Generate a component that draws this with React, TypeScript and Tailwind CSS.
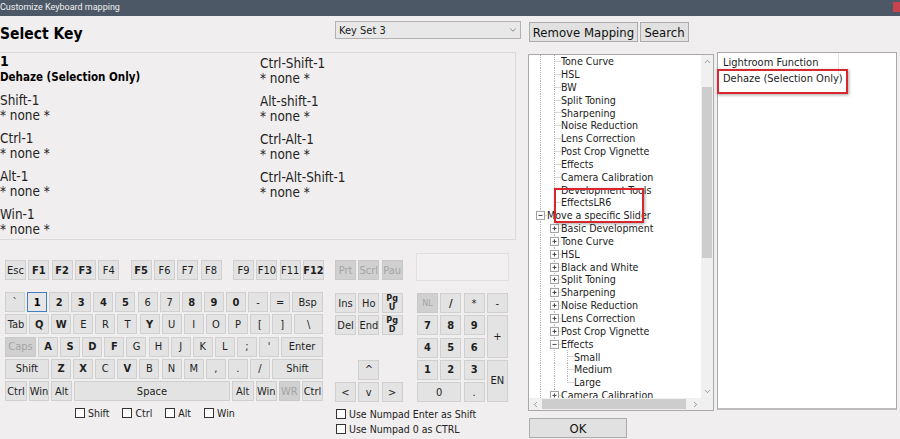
import React from 'react';
import { ChevronDown, ChevronUp, ChevronLeft, ChevronRight } from 'lucide-react';

type KeyProps = {
  label: React.ReactNode;
  w?: string;
  h?: string;
  b?: boolean;
  off?: boolean;
  sel?: boolean;
  small?: boolean;
};

function Key({ label, w = 'w-[20px]', h = 'h-[20px]', b, off, sel, small }: KeyProps) {
  const tone = off
    ? 'bg-[#d0d0d0] border-[#c8c8c8] text-[#a4a4a4]'
    : sel
    ? 'bg-[#e6e6e6] border-[#3f7fc4] text-black'
    : 'bg-[#e3e3e3] border-[#d0d0d0] text-[#1e1e1e]';
  return (
    <div
      className={`${w} ${h} shrink-0 flex items-center justify-center border text-center ${small ? 'text-[9px] leading-[9px]' : 'text-[11px] leading-none'} ${b ? 'font-bold' : ''} ${tone}`}
    >
      {label}
    </div>
  );
}

const K = (l: string, b = 0) => ({ l, b: !!b });

const fGroups = [
  [K('Esc'), K('F1', 1), K('F2', 1), K('F3', 1), K('F4')],
  [K('F5', 1), K('F6'), K('F7'), K('F8')],
  [K('F9'), K('F10'), K('F11'), K('F12', 1)],
];

const numRow = [K('`'), K('1', 1), K('2', 1), K('3', 1), K('4', 1), K('5', 1), K('6'), K('7'), K('8', 1), K('9', 1), K('0', 1), K('-'), K('=')];
const qRow = [K('Q', 1), K('W', 1), K('E'), K('R'), K('T'), K('Y', 1), K('U'), K('I'), K('O'), K('P'), K('['), K(']')];
const aRow = [K('A', 1), K('S', 1), K('D', 1), K('F', 1), K('G'), K('H'), K('J'), K('K'), K('L'), K(';'), K("'")];
const zRow = [K('Z', 1), K('X', 1), K('C'), K('V', 1), K('B'), K('N'), K('M'), K(','), K('.'), K('/')];

function Check({ label, cls = '' }: { label: string; cls?: string }) {
  return (
    <div className={`flex items-center whitespace-nowrap ${cls}`}>
      <div className="w-[10px] h-[10px] border border-[#333] bg-white shrink-0" />
      <span className="ml-[3px] text-[10.5px] leading-none text-[#222]">{label}</span>
    </div>
  );
}

type Row = { t: string; d: number; box?: '+' | '-'; last?: boolean };

const treeRows: Row[] = [
  { t: 'Tone Curve', d: 1 },
  { t: 'HSL', d: 1 },
  { t: 'BW', d: 1 },
  { t: 'Split Toning', d: 1 },
  { t: 'Sharpening', d: 1 },
  { t: 'Noise Reduction', d: 1 },
  { t: 'Lens Correction', d: 1 },
  { t: 'Post Crop Vignette', d: 1 },
  { t: 'Effects', d: 1 },
  { t: 'Camera Calibration', d: 1 },
  { t: 'Development Tools', d: 1 },
  { t: 'EffectsLR6', d: 1, last: true },
  { t: 'Move a specific Slider', d: 0, box: '-' },
  { t: 'Basic Development', d: 1, box: '+' },
  { t: 'Tone Curve', d: 1, box: '+' },
  { t: 'HSL', d: 1, box: '+' },
  { t: 'Black and White', d: 1, box: '+' },
  { t: 'Split Toning', d: 1, box: '+' },
  { t: 'Sharpening', d: 1, box: '+' },
  { t: 'Noise Reduction', d: 1, box: '+' },
  { t: 'Lens Correction', d: 1, box: '+' },
  { t: 'Post Crop Vignette', d: 1, box: '+' },
  { t: 'Effects', d: 1, box: '-' },
  { t: 'Small', d: 2 },
  { t: 'Medium', d: 2 },
  { t: 'Large', d: 2, last: true },
  { t: 'Camera Calibration', d: 1, box: '+' },
];

const COLS = [11.5, 25.5, 38.5];
const RH = 12.85;

function TreeRow({ r }: { r: Row }) {
  const x = COLS[r.d];
  const mid = RH / 2;
  const w = Math.round(x + 6);
  const line = '#b0b0b0';
  return (
    <div className="flex items-center h-[12.85px] whitespace-nowrap">
      <svg width={w} height={RH} className="shrink-0">
        {COLS.slice(0, r.d).map((c) => (
          <line key={c} x1={c} y1={0} x2={c} y2={RH} stroke={line} strokeDasharray="1 1" />
        ))}
        <line x1={x} y1={0} x2={x} y2={r.last ? mid : RH} stroke={line} strokeDasharray="1 1" />
        <line x1={x} y1={mid} x2={w} y2={mid} stroke={line} strokeDasharray="1 1" />
        {r.box && (
          <g>
            <rect x={x - 4} y={mid - 4} width={8} height={8} fill="#fff" stroke="#a0a0a0" />
            <line x1={x - 2} y1={mid} x2={x + 2} y2={mid} stroke="#444" />
            {r.box === '+' && <line x1={x} y1={mid - 2} x2={x} y2={mid + 2} stroke="#444" />}
          </g>
        )}
      </svg>
      <span className="text-[10.6px] leading-none text-[#1c1c1c]">{r.t}</span>
    </div>
  );
}

export default function App() {
  return (
    <div className="w-[900px] h-[439px] overflow-hidden bg-[#f0eeee] font-['DejaVu_Sans_Condensed','Liberation_Sans',sans-serif] text-[#1b1b1b]">
      {/* title bar */}
      <div className="h-[16px] bg-[#4d5866] flex items-start justify-between">
        <span className="font-['Roboto',sans-serif] text-[9px] leading-[15px] text-[#eef0f3]">Customize Keyboard mapping</span>
        <div className="w-[7px] h-[10px] mt-[2px] bg-[#c8434e]" />
      </div>

      <div className="flex">
        {/* left column */}
        <div className="w-[521px] shrink-0">
          <div className="h-[36px] flex items-start">
            <h1 className="mt-[8px] text-[15.5px] leading-[20px] font-bold text-black">Select Key</h1>
            <div className="ml-auto mt-[5px] w-[186px] h-[18px] bg-[#e8e8e8] border border-[#b3b3b3] flex items-center justify-between pl-[3px] pr-[2px]">
              <span className="text-[11px] leading-none text-[#222]">Key Set 3</span>
              <ChevronDown size={10} strokeWidth={1.5} className="text-[#555]" />
            </div>
          </div>

          {/* info panel */}
          <div className="-ml-px w-[517px] h-[188px] border border-[#dcdada] flex">
            <div className="w-[260px] flex flex-col">
              <div className="text-[14px] leading-[16px] font-bold text-black">1</div>
              <div className="text-[11.5px] leading-[16px] font-bold text-black">Dehaze (Selection Only)</div>
              {['Shift-1', 'Ctrl-1', 'Alt-1', 'Win-1'].map((k, i) => (
                <div key={k} className={`${i === 0 ? 'mt-[7.5px]' : 'mt-[8px]'} text-[13.4px] leading-[15px] text-[#222]`}>
                  <div>{k}</div>
                  <div>* none *</div>
                </div>
              ))}
            </div>
            <div className="flex flex-col pt-[2.5px]">
              {['Ctrl-Shift-1', 'Alt-shift-1', 'Ctrl-Alt-1', 'Ctrl-Alt-Shift-1'].map((k, i) => (
                <div key={k} className={`${i === 0 ? '' : 'mt-[8px]'} text-[13.4px] leading-[15px] text-[#222]`}>
                  <div>{k}</div>
                  <div>* none *</div>
                </div>
              ))}
            </div>
          </div>

          {/* keyboard */}
          <div className="mt-[13px] flex items-start">
            <div className="ml-[5px] w-[318px] flex flex-col">
              <div className="mt-[7px] flex gap-[11.5px]">
                {fGroups.map((g, gi) => (
                  <div key={gi} className="flex gap-[2.3px]">
                    {g.map((k) => (
                      <Key key={k.l} label={k.l} b={k.b} w="w-[21px]" />
                    ))}
                  </div>
                ))}
              </div>
              <div className="mt-[12px] flex flex-col gap-[2.25px]">
                <div className="flex gap-[2.1px]">
                  {numRow.map((k) => (
                    <Key key={k.l} label={k.l} b={k.b} sel={k.l === '1'} />
                  ))}
                  <Key label="Bsp" w="flex-1" />
                </div>
                <div className="flex gap-[2.1px]">
                  <Key label="Tab" w="w-[22px]" />
                  {qRow.map((k) => (
                    <Key key={k.l} label={k.l} b={k.b} />
                  ))}
                  <Key label="\" w="flex-1" />
                </div>
                <div className="flex gap-[2.1px]">
                  <Key label="Caps" w="w-[31px]" off />
                  {aRow.map((k) => (
                    <Key key={k.l} label={k.l} b={k.b} />
                  ))}
                  <Key label="Enter" w="flex-1" />
                </div>
                <div className="flex gap-[2.1px]">
                  <Key label="Shift" w="w-[44px]" />
                  {zRow.map((k) => (
                    <Key key={k.l} label={k.l} b={k.b} />
                  ))}
                  <Key label="Shift" w="flex-1" />
                </div>
                <div className="flex gap-[2.1px]">
                  <Key label="Ctrl" w="w-[22px]" />
                  <Key label="Win" w="w-[20px]" />
                  <Key label="Alt" w="w-[21px]" />
                  <Key label="Space" w="flex-1" />
                  <Key label="Alt" w="w-[22px]" />
                  <Key label="Win" w="w-[21px]" />
                  <Key label="WR" w="w-[21px]" off />
                  <Key label="Ctrl" w="w-[21px]" />
                </div>
              </div>
              <div className="mt-[7px] pl-[70px] flex gap-[13px]">
                <Check label="Shift" />
                <Check label="Ctrl" />
                <Check label="Alt" />
                <Check label="Win" />
              </div>
            </div>

            {/* nav cluster */}
            <div className="ml-[12px] w-[68px] flex flex-col">
              <div className="mt-[7px] flex gap-[2.3px]">
                <Key label="Prt" w="w-[21px]" off />
                <Key label="Scrl" w="w-[21px]" off />
                <Key label="Pau" w="w-[21px]" off />
              </div>
              <div className="mt-[13px] grid grid-cols-[21px_21px_21px] auto-rows-[20px] gap-x-[2.3px] gap-y-[2.25px]">
                <Key label="Ins" w="w-full" />
                <Key label="Ho" w="w-full" />
                <Key label={<span>Pg<br />U</span>} w="w-full" b small />
                <Key label="Del" w="w-full" />
                <Key label="End" w="w-full" />
                <Key label={<span>Pg<br />D</span>} w="w-full" b small />
                <div />
                <div />
                <div />
                <div />
                <Key label="^" w="w-full" />
                <div />
                <Key label="<" w="w-full" />
                <Key label="v" w="w-full" />
                <Key label=">" w="w-full" />
              </div>
              <div className="mt-[4.5px] flex flex-col">
                <Check label="Use Numpad Enter as Shift" cls="h-[15px] ml-px" />
                <Check label="Use Numpad 0 as CTRL" cls="h-[15px] ml-px" />
              </div>
            </div>

            {/* numpad */}
            <div className="ml-[13px] flex flex-col">
              <div className="w-[93px] h-[28px] border border-[#e2e0e0] bg-[#f2f0f0]" />
              <div className="mt-[12px] ml-px grid grid-cols-[21px_21px_21px_21px] auto-rows-[20px] gap-x-[2.3px] gap-y-[2.25px]">
                <Key label="NL" w="w-full" off small />
                <Key label="/" w="w-full" b />
                <Key label="*" w="w-full" />
                <Key label="-" w="w-full" />
                <Key label="7" w="w-full" b />
                <Key label="8" w="w-full" b />
                <Key label="9" w="w-full" b />
                <div className="row-span-2 flex">
                  <Key label="+" w="w-full" h="h-full" />
                </div>
                <Key label="4" w="w-full" b />
                <Key label="5" w="w-full" b />
                <Key label="6" w="w-full" b />
                <Key label="1" w="w-full" b />
                <Key label="2" w="w-full" b />
                <Key label="3" w="w-full" b />
                <div className="row-span-2 flex">
                  <Key label="EN" w="w-full" h="h-full" />
                </div>
                <div className="col-span-2 flex">
                  <Key label="0" w="w-full" />
                </div>
                <Key label="." w="w-full" />
              </div>
            </div>
          </div>
        </div>

        {/* right column */}
        <div className="ml-[7px] flex flex-col">
          <div className="mt-[6px] ml-px flex gap-[2px]">
            <button className="w-[109px] h-[20px] bg-[#e1e1e1] border border-[#adadad] text-[13px] leading-none text-[#111]">Remove Mapping</button>
            <button className="w-[49px] h-[20px] bg-[#e1e1e1] border border-[#adadad] text-[13px] leading-none text-[#111]">Search</button>
          </div>

          <div className="mt-[10px] flex items-start gap-[3px]">
            {/* tree */}
            <div className="relative mt-[2px] w-[186px] h-[357px] border border-[#a9a9a9] bg-white flex flex-col">
              <div className="flex flex-1 min-h-0">
                <div className="flex-1 overflow-hidden">
                  {treeRows.map((r, i) => (
                    <TreeRow key={i} r={r} />
                  ))}
                </div>
                <div className="w-[12px] bg-[#f0f0f0] flex flex-col">
                  <div className="h-[13px] flex items-center justify-center">
                    <ChevronUp size={9} strokeWidth={1.6} className="text-[#606060]" />
                  </div>
                  <div className="flex-1">
                    <div className="mt-[19px] mx-px h-[171px] bg-[#cdcdcd]" />
                  </div>
                  <div className="h-[13px] flex items-center justify-center">
                    <ChevronDown size={9} strokeWidth={1.6} className="text-[#606060]" />
                  </div>
                </div>
              </div>
              <div className="h-[12px] flex bg-[#f0f0f0]">
                <div className="w-[12px] flex items-center justify-center">
                  <ChevronLeft size={9} strokeWidth={1.6} className="text-[#606060]" />
                </div>
                <div className="flex-1 flex items-center">
                  <div className="ml-px w-[144px] h-[10px] bg-[#cdcdcd]" />
                </div>
                <div className="w-[12px] flex items-center justify-center">
                  <ChevronRight size={9} strokeWidth={1.6} className="text-[#606060]" />
                </div>
                <div className="w-[12px] bg-[#f0f0f0]" />
              </div>
              <div className="absolute left-[25px] top-[133px] w-[90px] h-[35px] border-[2.5px] border-[#d8282e] shadow-[1px_1px_3px_rgba(0,0,0,0.35)]" />
            </div>

            {/* function list */}
            <div className="relative w-[180px] h-[358px] border border-[#a9a9a9] border-b-[#bdbdbd] border-b-2 bg-white">
              <div className="relative h-[18px] pt-[2px] pl-[5px] text-[11px] leading-[15px] text-[#1c1c1c]">
                Lightroom Function
                <div className="absolute left-[120px] top-0 w-px h-[22px] bg-[#e3e3e3]" />
              </div>
              <div className="pl-[5px] text-[11px] leading-[15px] text-[#1c1c1c]">Dehaze (Selection Only)</div>
              <div className="absolute left-[-1px] top-[16px] w-[131px] h-[25px] border-[2.5px] border-[#d8282e] shadow-[1px_1px_3px_rgba(0,0,0,0.35)]" />
            </div>
          </div>

          <button className="mt-[7px] ml-px w-[98px] h-[20px] bg-[#e1e1e1] border border-[#adadad] text-[13px] leading-none text-[#111]">OK</button>
        </div>
      </div>
    </div>
  );
}
